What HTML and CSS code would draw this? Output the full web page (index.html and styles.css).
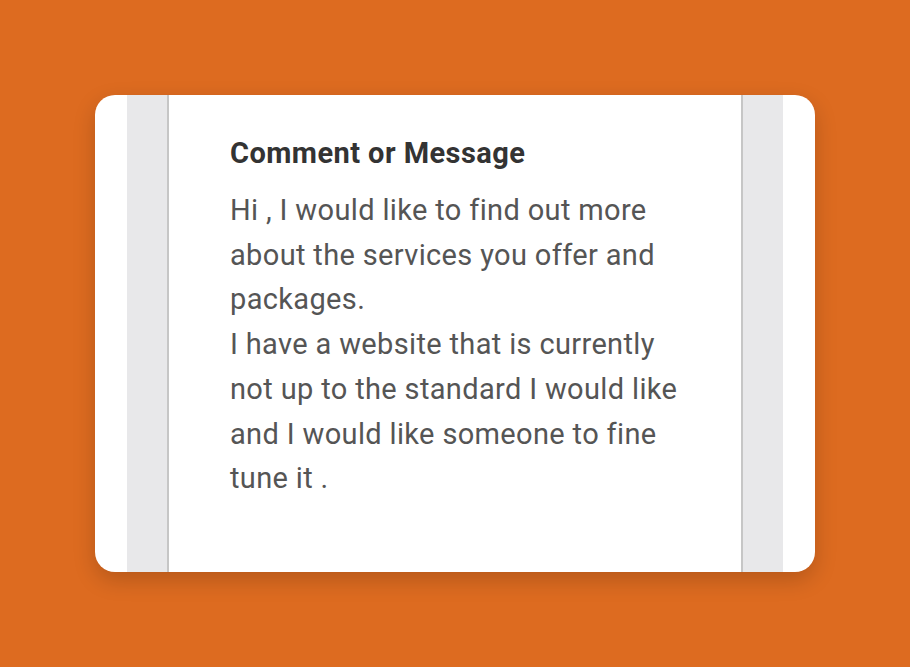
FILE: index.html
```html
<!DOCTYPE html>
<html lang="en">
<head>
    <meta charset="UTF-8">
    <meta name="viewport" content="width=device-width, initial-scale=1.0">
    <title>Comment or Message</title>
    <link rel="stylesheet" href="styles.css">
</head>
<body>
    <!-- Message card -->
    <div class="card">
        <div class="side"></div>
        <div class="message">
            <h2 class="message-title">Comment or Message</h2>
            <p class="message-text">Hi , I would like to find out more about the services you offer and packages.<br>I have a website that is currently not up to the standard I would like and I would like someone to fine tune it .</p>
        </div>
        <div class="side"></div>
    </div>
</body>
</html>
```

FILE: styles.css
```css
html, body {
    height: 100%;
}
body {
    margin: 0;
    background-color: #dd6b20;
    font-family: Roboto, "Noto Sans", sans-serif;
    display: flex;
    align-items: center;
    justify-content: center;
}
.card {
    width: 720px;
    height: 477px;
    box-sizing: border-box;
    padding: 0 32px;
    background-color: white;
    border-radius: 20px;
    box-shadow: 0 8px 22px rgba(0, 0, 0, 0.18);
    display: flex;
}
.side {
    width: 40px;
    background-color: #e8e8ea;
}
.message {
    flex: 1;
    border-left: 2px solid #c6c6c6;
    border-right: 2px solid #c6c6c6;
    padding: 40px 61px 0 61px;
}
.message-title {
    margin: 0 0 17px 0;
    font-size: 29px;
    font-weight: bold;
    letter-spacing: 0.45px;
    color: #333;
    line-height: 36px;
}
.message-text {
    margin: 0;
    font-size: 29px;
    letter-spacing: 0.35px;
    line-height: 44.7px;
    color: #555;
}
```
